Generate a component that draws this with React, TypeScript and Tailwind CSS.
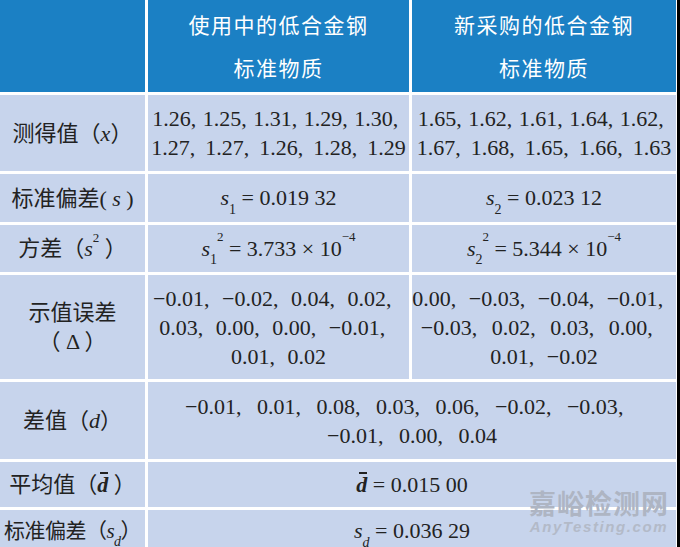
import React from 'react';

const serif = { fontFamily: '"Liberation Serif", "Times New Roman", "Noto Sans CJK SC", serif' };

function V({ children }: { children: React.ReactNode }) {
  return <i className="italic">{children}</i>;
}

function Sub({ children }: { children: React.ReactNode }) {
  return <sub className="text-[14px] align-[-5px] leading-none">{children}</sub>;
}

function Sup({ children }: { children: React.ReactNode }) {
  return <sup className="text-[13px] align-[8px] leading-none">{children}</sup>;
}

function DBar() {
  return (
    <span className="relative inline-block">
      <span className="absolute left-[3px] right-0 top-[2px] h-[2px] bg-[#222]" />
      <i className="font-bold">d</i>
    </span>
  );
}

// numbers joined by a comma slot of fixed width
function Line({ items, gap, tail = false }: { items: string[]; gap: string; tail?: boolean }) {
  return (
    <span className="flex">
      {items.map((n, i) => (
        <React.Fragment key={i}>
          <span>{n}</span>
          {(i < items.length - 1 || tail) && <span className={`inline-block text-left ${gap}`}>,</span>}
        </React.Fragment>
      ))}
    </span>
  );
}

function Head({ children }: { children: React.ReactNode }) {
  return (
    <div className="bg-[#1b80c4] text-white flex flex-col items-center justify-center text-[21px] tracking-[1.5px] leading-[43px] font-['Noto_Sans_CJK_SC',sans-serif]">
      {children}
    </div>
  );
}

function Cell({ children, span = false }: { children: React.ReactNode; span?: boolean }) {
  return (
    <div
      className={`bg-[#c7d4ec] text-[#222] flex flex-col items-center justify-center text-center text-[22px] leading-[29px] whitespace-nowrap ${span ? 'col-span-2' : ''}`}
    >
      {children}
    </div>
  );
}

export default function App() {
  return (
    <div className="w-[680px] h-[547px] overflow-hidden flex bg-black" style={serif}>
      <div className="relative w-[677px] h-[547px] bg-white pr-[1px]">
        <div className="grid grid-cols-[145px_261px_264px] grid-rows-[92px_76px_48px_47px_104px_77px_45px_50px] gap-[3px]">
          <Head>{''}</Head>
          <Head>
            <span>使用中的低合金钢</span>
            <span>标准物质</span>
          </Head>
          <Head>
            <span>新采购的低合金钢</span>
            <span>标准物质</span>
          </Head>

          <Cell>
            <span>
              测得值（<V>x</V>）
            </span>
          </Cell>
          <Cell>
            <Line items={['1.26', '1.25', '1.31', '1.29', '1.30']} gap="w-[12px]" tail />
            <Line items={['1.27', '1.27', '1.26', '1.28', '1.29']} gap="w-[15.5px]" />
          </Cell>
          <Cell>
            <Line items={['1.65', '1.62', '1.61', '1.64', '1.62']} gap="w-[12px]" tail />
            <Line items={['1.67', '1.68', '1.65', '1.66', '1.63']} gap="w-[15.5px]" />
          </Cell>

          <Cell>
            <span>
              标准偏差( <V>s</V> )
            </span>
          </Cell>
          <Cell>
            <span>
              <V>s</V>
              <Sub>1</Sub> = 0.019 32
            </span>
          </Cell>
          <Cell>
            <span>
              <V>s</V>
              <Sub>2</Sub> = 0.023 12
            </span>
          </Cell>

          <Cell>
            <span>
              方差（<V>s</V>
              <Sup>2</Sup> ）
            </span>
          </Cell>
          <Cell>
            <span>
              <V>s</V>
              <Sub>1</Sub>
              <Sup>2</Sup> = 3.733 × 10<Sup>−4</Sup>
            </span>
          </Cell>
          <Cell>
            <span>
              <V>s</V>
              <Sub>2</Sub>
              <Sup>2</Sup> = 5.344 × 10<Sup>−4</Sup>
            </span>
          </Cell>

          <Cell>
            <span>示值误差</span>
            <span>（ Δ ）</span>
          </Cell>
          <Cell>
            <Line items={['−0.01', '−0.02', '0.04', '0.02']} gap="w-[18px]" tail />
            <Line items={['0.03', '0.00', '0.00', '−0.01']} gap="w-[18px]" tail />
            <Line items={['0.01', '0.02']} gap="w-[18px]" />
          </Cell>
          <Cell>
            <Line items={['0.00', '−0.03', '−0.04', '−0.01']} gap="w-[18px]" tail />
            <Line items={['−0.03', '0.02', '0.03', '0.00']} gap="w-[20px]" tail />
            <Line items={['0.01', '−0.02']} gap="w-[18px]" />
          </Cell>

          <Cell>
            <span>
              差值（<V>d</V>）
            </span>
          </Cell>
          <Cell span>
            <Line
              items={['−0.01', '0.01', '0.08', '0.03', '0.06', '−0.02', '−0.03']}
              gap="w-[21px]"
              tail
            />
            <Line items={['−0.01', '0.00', '0.04']} gap="w-[21px]" />
          </Cell>

          <Cell>
            <span>
              平均值（<DBar /> ）
            </span>
          </Cell>
          <Cell span>
            <span>
              <DBar /> = 0.015 00
            </span>
          </Cell>

          <Cell>
            <span className="-mt-[8px] text-[21px] tracking-[-0.5px]">
              标准偏差（<V>s</V>
              <Sub>
                <V>d</V>
              </Sub>
              ）
            </span>
          </Cell>
          <Cell span>
            <span className="-mt-[8px]">
              <V>s</V>
              <Sub>
                <V>d</V>
              </Sub>{' '}
              = 0.036 29
            </span>
          </Cell>
        </div>

        <div className="absolute left-[526px] top-[487px] w-[146px] flex flex-col items-center pointer-events-none whitespace-nowrap">
          <span className="text-[27px] leading-[32px] tracking-[1px] text-[#aeb5c3] font-['Noto_Sans_CJK_SC',sans-serif] font-bold">
            嘉峪检测网
          </span>
          <span className="text-[15px] leading-[16px] italic font-bold tracking-[1.6px] text-[#b3bac8] font-['Liberation_Sans',sans-serif]">
            AnyTesting.com
          </span>
        </div>
      </div>
    </div>
  );
}
